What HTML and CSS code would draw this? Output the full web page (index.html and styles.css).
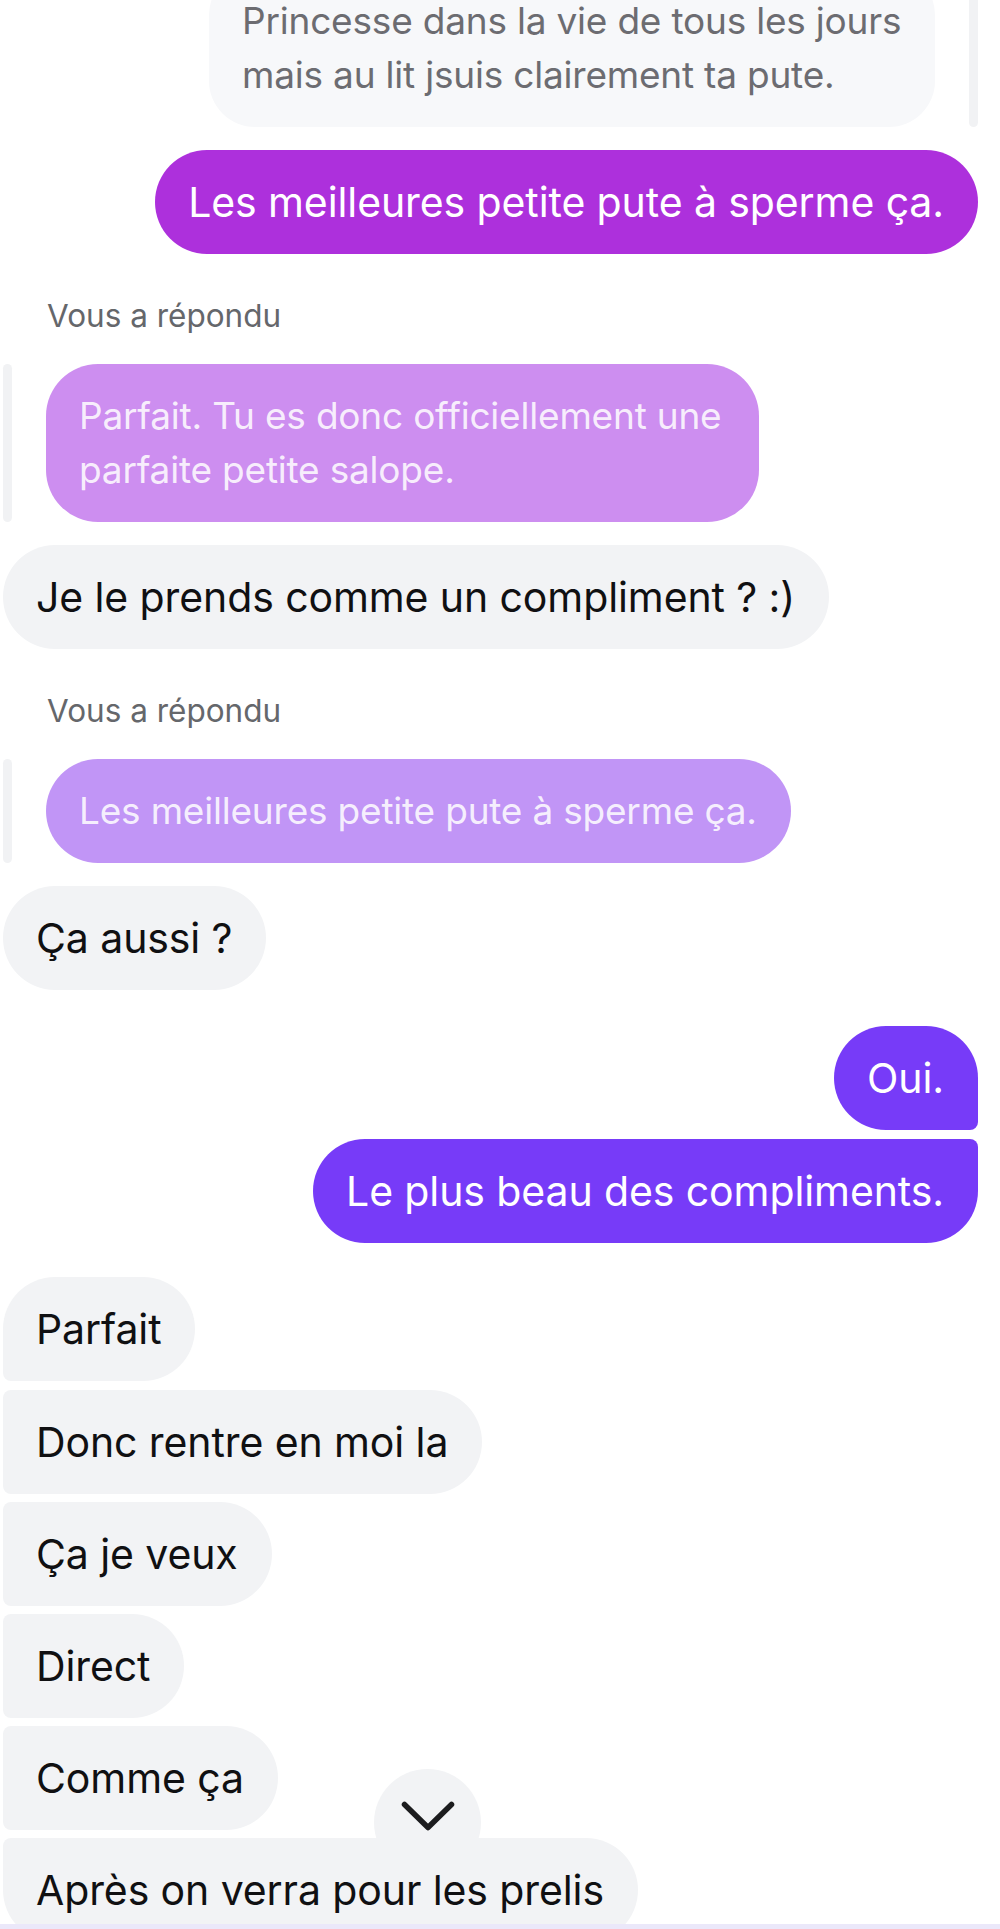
FILE: index.html
```html
<!DOCTYPE html>
<html lang="fr">
<head>
<meta charset="utf-8">
<title>Conversation</title>
<link rel="stylesheet" href="styles.css">
</head>
<body>
<div class="page">
  <div class="chat">
    <div class="row out quote-row">
      <div class="bubble quoted quoted-out">Princesse dans la vie de tous les jours mais au lit jsuis clairement ta pute.</div>
      <div class="bar"></div>
    </div>
    <div class="row out gap-23">
      <div class="bubble magenta">Les meilleures petite pute à sperme ça.</div>
    </div>

    <div class="replied">Vous a répondu</div>
    <div class="row in reply-row">
      <div class="bar"></div>
      <div class="bubble quoted quoted-in q1">Parfait. Tu es donc officiellement une parfaite petite salope.</div>
    </div>
    <div class="row in gap-23">
      <div class="bubble grey">Je le prends comme un compliment ? :)</div>
    </div>

    <div class="replied">Vous a répondu</div>
    <div class="row in reply-row">
      <div class="bar"></div>
      <div class="bubble quoted quoted-in q2">Les meilleures petite pute à sperme ça.</div>
    </div>
    <div class="row in gap-23">
      <div class="bubble grey">Ça aussi ?</div>
    </div>

    <div class="row out gap-36">
      <div class="bubble violet first-out">Oui.</div>
    </div>
    <div class="row out gap-9">
      <div class="bubble violet last-out">Le plus beau des compliments.</div>
    </div>

    <div class="row in gap-34">
      <div class="bubble grey first-in">Parfait</div>
    </div>
    <div class="row in gap-9">
      <div class="bubble grey mid-in">Donc rentre en moi la</div>
    </div>
    <div class="row in gap-8">
      <div class="bubble grey mid-in">Ça je veux</div>
    </div>
    <div class="row in gap-8">
      <div class="bubble grey mid-in">Direct</div>
    </div>
    <div class="row in gap-8">
      <div class="bubble grey mid-in">Comme ça</div>
    </div>
    <div class="row in gap-8">
      <div class="bubble grey last-in">Après on verra pour les prelis</div>
    </div>
  </div>

  <button class="scroll-down" aria-label="Défiler vers le bas">
    <svg width="54" height="30" viewBox="0 0 54 30" aria-hidden="true">
      <polyline points="3.5,3.5 27,26.5 50.5,3.5" fill="none" stroke="#1c1c1e" stroke-width="5.5" stroke-linecap="round" stroke-linejoin="round"/>
    </svg>
  </button>
  <div class="composer-edge"></div>
</div>
</body>
</html>
```

FILE: styles.css
```css
* { box-sizing: border-box; }

html, body {
  margin: 0;
  padding: 0;
  background: #ffffff;
}

body {
  font-family: "Inter", "Noto Sans", "Liberation Sans", sans-serif;
  color: #101012;
}

.page {
  position: relative;
  width: 1000px;
  height: 1929px;
  overflow: hidden;
}

.chat {
  display: flex;
  flex-direction: column;
  padding: 0 22px 0 3px;
  margin-top: -31px;
}

.row {
  display: flex;
  align-items: stretch;
}

.out { justify-content: flex-end; }
.in { justify-content: flex-start; }

.gap-8 { margin-top: 8px; }
.gap-9 { margin-top: 9px; }
.gap-23 { margin-top: 23px; }
.gap-34 { margin-top: 34px; }
.gap-36 { margin-top: 36px; }

.bubble {
  font-size: 41px;
  line-height: 54px;
  padding: 25px 34px 25px 33px;
  border-radius: 52px;
  letter-spacing: -0.1px;
}

.quoted {
  font-size: 37px;
  letter-spacing: -0.2px;
}

.bar {
  width: 9px;
  border-radius: 5px;
  background: #f1f2f4;
  flex: none;
}

.quote-row { gap: 34px; }

.quoted-out {
  width: 726px;
  padding-right: 26px;
  background: #f7f8fa;
  color: #6c6c71;
  border-radius: 46px;
}

.magenta {
  background: #ad30dc;
  color: #ffffff;
}

.replied {
  margin-top: 45px;
  margin-left: 44px;
  font-size: 31.5px;
  line-height: 34px;
  color: #65676b;
}

.reply-row {
  margin-top: 31px;
  gap: 34px;
}

.quoted-in {
  color: rgba(255, 255, 255, 0.86);
}

.q1 {
  width: 713px;
  background: #cd8ef0;
}

.q2 {
  background: #c195f6;
}

.grey {
  background: #f2f3f5;
}

.violet {
  background: #773bf8;
  color: #ffffff;
}

.first-out { border-bottom-right-radius: 8px; }
.last-out { border-top-right-radius: 8px; }
.first-in { border-bottom-left-radius: 8px; }
.mid-in { border-top-left-radius: 8px; border-bottom-left-radius: 8px; }
.last-in { border-top-left-radius: 8px; }

.scroll-down {
  position: absolute;
  left: 374px;
  top: 1769px;
  width: 107px;
  height: 107px;
  border: none;
  border-radius: 50%;
  background: #f2f3f5;
  padding: 0 0 14px;
  display: flex;
  align-items: center;
  justify-content: center;
}

.composer-edge {
  position: absolute;
  left: 0;
  right: 0;
  bottom: 0;
  height: 5px;
  background: #ebe8fa;
}
```
